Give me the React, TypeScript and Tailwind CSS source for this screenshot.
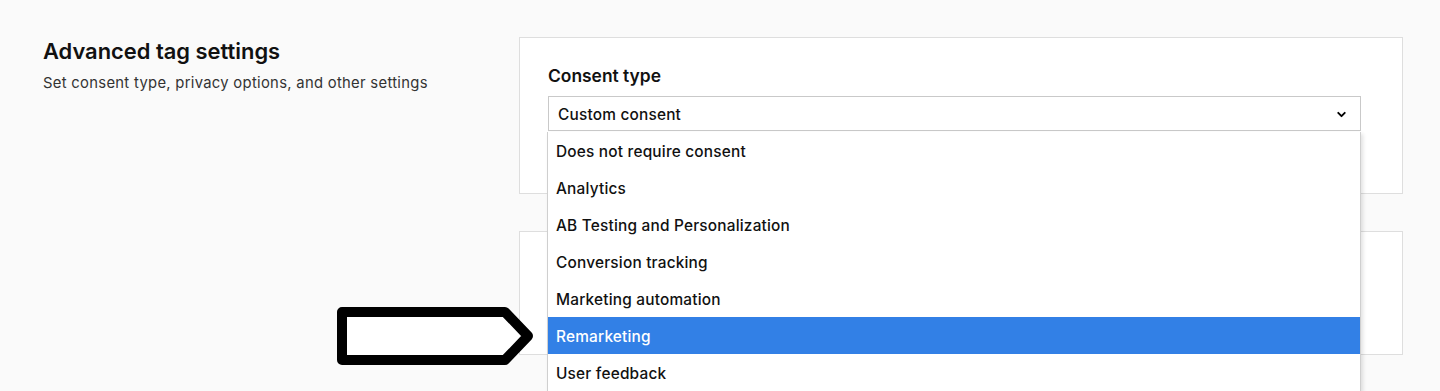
import { ChevronDown } from 'lucide-react';

const options = [
  'Does not require consent',
  'Analytics',
  'AB Testing and Personalization',
  'Conversion tracking',
  'Marketing automation',
  'Remarketing',
  'User feedback',
];

export default function App() {
  return (
    <div
      className="relative h-[391px] w-[1440px] overflow-hidden bg-[#fafafa] text-[#111]"
      style={{ fontFamily: 'Inter, "Noto Sans", sans-serif' }}
    >
      <div className="flex pl-[43px] pt-[37px]">
        <div className="w-[476px] shrink-0">
          <h2 className="mt-[1px] text-[21.9px] font-semibold leading-[26px]">Advanced tag settings</h2>
          <p className="mt-[9px] text-[14.8px] leading-[20px] text-[#333] tracking-[0.3px]">
            Set consent type, privacy options, and other settings
          </p>
        </div>

        <div className="flex w-[884px] flex-col gap-[37px]">
          <div className="relative h-[157px] border border-[#dedede] bg-white pl-[28px] pr-[41px] pt-[27px]">
            <div className="text-[17.4px] font-semibold leading-[22px]">Consent type</div>
            <div className="relative mt-[9px]">
              <div className="flex h-[35px] items-center justify-between border border-[#c9c9c9] bg-white pl-[9px] pr-[12px] pt-[2px]">
                <span className="text-[15.4px] font-medium tracking-[0.2px]">Custom consent</span>
                <ChevronDown size={13} strokeWidth={3.5} className="text-black" />
              </div>
              <ul className="absolute left-[-1px] top-[36px] z-10 w-[814px] border-x border-[#cfcfcf] bg-white shadow-[2px_2px_4px_rgba(0,0,0,0.12)]">
                {options.map((opt) => (
                  <li
                    key={opt}
                    className={`flex h-[37px] items-center pl-[8px] pt-[2px] text-[15.4px] font-medium tracking-[0.2px] ${
                      opt === 'Remarketing' ? 'bg-[#3280e6] text-white' : 'text-[#111]'
                    }`}
                  >
                    {opt}
                  </li>
                ))}
              </ul>
            </div>
          </div>
          <div className="h-[124px] border border-[#dedede] bg-white" />
          <div className="h-[60px] border border-[#dedede] bg-white" />
        </div>
      </div>

      <svg className="absolute left-[335px] top-[304px]" width="202" height="64" viewBox="0 0 202 64">
        <path
          d="M7 8 H170 L193 32 L170 56 H7 Z"
          fill="white"
          stroke="black"
          strokeWidth="10"
          strokeLinejoin="round"
        />
      </svg>
    </div>
  );
}
